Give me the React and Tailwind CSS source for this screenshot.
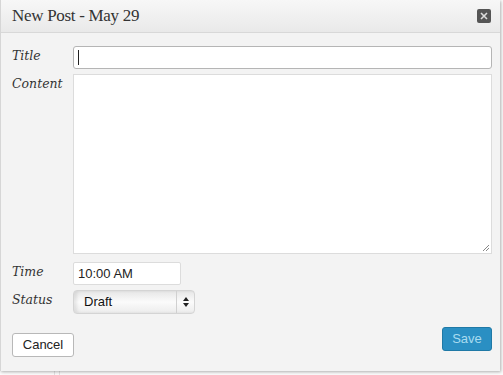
export default function App() {
  const serif = { fontFamily: '"DejaVu Serif", Georgia, serif' };
  return (
    <div className="w-[503px] h-[375px] bg-[#fbfbfb] overflow-hidden relative">
      {/* faint lines of the page behind */}
      <div className="absolute left-[54px] top-0 bottom-0 w-px bg-[#e2e2e2]" />
      <div className="absolute left-[59px] top-0 bottom-0 w-px bg-[#e2e2e2]" />

      {/* ─── DIALOG ─────────────────────────────── */}
      <div className="relative w-[500px] h-[371px] bg-[#f3f3f3] border-l border-[#d6d6d6] shadow-[1px_1px_3px_rgba(0,0,0,0.3)] flex flex-col">
        {/* Header */}
        <div className="h-[33px] shrink-0 flex items-center justify-between pl-[11px] pr-[8px] bg-gradient-to-b from-[#f7f7f7] to-[#e9e9e9] border-b border-[#d8d8d8]">
          <h1
            className="text-[#333] tracking-[-0.3px]"
            style={{ fontFamily: '"Liberation Serif", Georgia, serif', fontSize: "17px" }}
          >
            New Post - May 29
          </h1>
          <button className="w-[14px] h-[14px] rounded-[2px] bg-[#555] flex items-center justify-center mr-[1px]">
            <svg width="8" height="8" viewBox="0 0 8 8">
              <path d="M1 1 L7 7 M7 1 L1 7" stroke="#ddd" strokeWidth="1.6" />
            </svg>
          </button>
        </div>

        {/* Form */}
        <div className="flex flex-col pl-[11px] pr-[8px] pt-[13px]">
          <div className="flex items-start">
            <label className="w-[61px] pt-[1px] text-[12.5px] italic text-[#333]" style={serif}>
              Title
            </label>
            <div className="flex-1 h-[23px] bg-white border border-[#b5b5b5] rounded-[3px] flex items-center pl-[4px]">
              <div className="w-px h-[15px] bg-[#222]" />
            </div>
          </div>

          <div className="flex items-start mt-[5px]">
            <label className="w-[61px] pt-[1px] text-[12.5px] italic text-[#333]" style={serif}>
              Content
            </label>
            <div className="flex-1 h-[180px] bg-white border border-[#dcdcdc] relative">
              <svg className="absolute right-[1px] bottom-[1px]" width="8" height="8" viewBox="0 0 8 8">
                <path d="M7 1 L1 7 M7 4 L4 7" stroke="#888" strokeWidth="1" />
              </svg>
            </div>
          </div>

          <div className="flex items-start mt-[8px]">
            <label className="w-[61px] pt-[1px] text-[12.5px] italic text-[#333]" style={serif}>
              Time
            </label>
            <div
              className="w-[108px] h-[23px] bg-white border border-[#dcdcdc] rounded-[2px] flex items-center pl-[4px] text-[13px] text-[#222]"
              style={{ fontFamily: '"Liberation Sans", Arial, sans-serif' }}
            >
              10:00 AM
            </div>
          </div>

          <div className="flex items-start mt-[5px]">
            <label className="w-[61px] pt-[1px] text-[12.5px] italic text-[#333]" style={serif}>
              Status
            </label>
            <div
              className="w-[122px] h-[24px] rounded-[4px] border border-[#d4d4d4] bg-gradient-to-b from-[#e6e6e6] via-[#fbfbfb] to-[#ececec] shadow-[inset_3px_0_3px_rgba(0,0,0,0.08)] flex items-center text-[13px] text-[#111]"
              style={{ fontFamily: '"Liberation Sans", Arial, sans-serif' }}
            >
              <span className="flex-1 pl-[10px]">Draft</span>
              <span className="w-[18px] h-full border-l border-[#d0d0d0] flex items-center justify-center">
                <svg width="6" height="10" viewBox="0 0 6 10">
                  <path d="M3 0 L6 4 L0 4 Z M0 6 L6 6 L3 10 Z" fill="#222" />
                </svg>
              </span>
            </div>
          </div>

          <div
            className="flex items-start justify-between mt-[13px]"
            style={{ fontFamily: '"Liberation Sans", Arial, sans-serif' }}
          >
            <button className="mt-[6px] w-[62px] h-[24px] bg-white border border-[#b8b8b8] rounded-[3px] text-[13px] text-[#222]">
              Cancel
            </button>
            <button className="w-[50px] h-[24px] bg-[#2a8fc3] border border-[#1f79a6] rounded-[3px] text-[13px] text-[#a9dcf0]">
              Save
            </button>
          </div>
        </div>
      </div>
    </div>
  );
}
